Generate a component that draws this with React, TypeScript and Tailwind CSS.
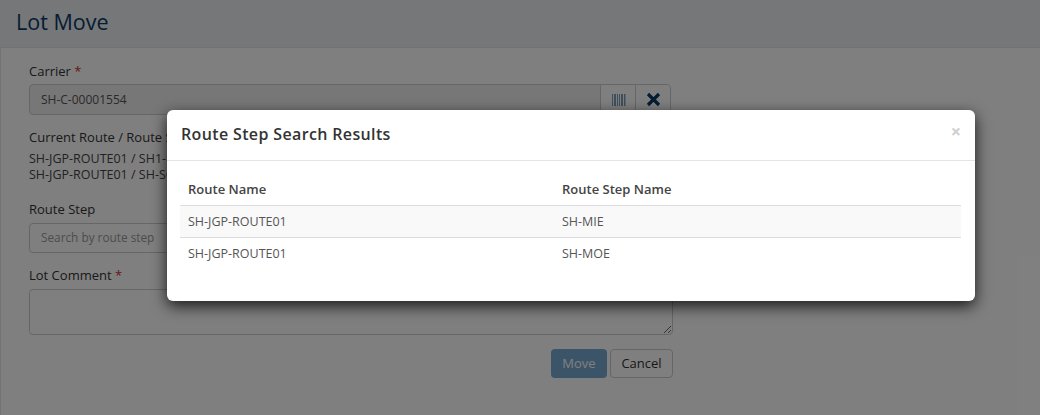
import React from "react";

const font = { fontFamily: '"Open Sans", sans-serif' };

const Req = () => <span className="text-[#c9302c]">*</span>;

const Barcode = () => (
  <svg width="14" height="12" viewBox="0 0 14 12" fill="#7f9cbc" className="ml-[1px]">
    <rect x="0" width="1" height="12" />
    <rect x="2" width="2" height="12" />
    <rect x="5" width="1" height="12" />
    <rect x="7" width="1" height="12" />
    <rect x="9" width="2" height="12" />
    <rect x="12" width="1" height="12" />
    <rect x="13" width="1" height="12" opacity="0.5" />
  </svg>
);

const App = () => {
  return (
    <div style={font} className="relative w-[1040px] h-[415px] overflow-hidden bg-white text-[13px] text-[#333]">
      <div className="h-[48px] bg-[#ebeef3] border-b border-[#e2e5ea] pl-4 flex items-center">
        <h1 className="text-[21.5px] leading-none text-[#0b3a66] pb-[4px]">Lot Move</h1>
      </div>
      <div className="pl-[28px] w-[673px] pt-[14px] border-l border-[#e6e6e6] h-[367px]">
        <div className="leading-[18px] h-[22px]">
          Carrier <Req />
        </div>
        <div className="flex w-[642px] h-[31px] border border-[#ccc] rounded-[4px] bg-[#eee] overflow-hidden">
          <div className="flex-1 pl-[11px] text-[12px] text-[#555] flex items-center">SH-C-00001554</div>
          <div className="w-[35px] bg-white border-l border-[#ccc] flex items-center justify-center">
            <Barcode />
          </div>
          <div className="w-[35px] bg-white border-l border-[#ccc] flex items-center justify-center">
            <svg width="15" height="15" viewBox="0 0 15 15" className="ml-[1px]">
              <path d="M2 2 L13 13 M13 2 L2 13" stroke="#0b3a66" strokeWidth="3.2" />
            </svg>
          </div>
        </div>
        <div className="mt-[13px] leading-[18px]">Current Route / Route Step</div>
        <div className="mt-[5px] text-[12.5px] leading-[16px] text-[#444]">
          <div>SH-JGP-ROUTE01 / SH1-MIE</div>
          <div>SH-JGP-ROUTE01 / SH-SOE</div>
        </div>
        <div className="mt-[17px] leading-[18px]">Route Step</div>
        <div className="mt-[5px] w-[642px] h-[30px] border border-[#ccc] rounded-[4px] bg-white pl-[11px] text-[11.8px] text-[#999] flex items-center">
          Search by route step
        </div>
        <div className="mt-[13px] leading-[18px]">
          Lot Comment <Req />
        </div>
        <textarea className="block mt-[5px] w-full h-[46px] border border-[#ccc] rounded-[4px] bg-white" readOnly />
        <div className="mt-[14px] flex justify-end gap-[3px]">
          <button className="w-[56px] h-[29px] rounded-[4px] bg-[#337ab7] opacity-65 text-white text-[13px]">Move</button>
          <button className="w-[63px] h-[29px] rounded-[4px] bg-white border border-[#ccc] text-[#333] text-[13px]">Cancel</button>
        </div>
      </div>

      {/* backdrop */}
      <div className="absolute inset-0 bg-black/50" />

      <div className="absolute left-[167px] top-[110px] w-[808px] h-[191px] bg-white rounded-[6px] shadow-[0_5px_15px_rgba(0,0,0,0.8)]">
        <div className="h-[51px] border-b border-[#e5e5e5] px-[14px] pb-[2px] flex items-center justify-between">
          <h4 className="text-[16px] font-semibold text-[#333] tracking-[0.36px]">Route Step Search Results</h4>
          <span className="text-[#cfcfcf] text-[18px] font-bold leading-none -mt-[7px]">×</span>
        </div>
        <div className="ml-[13px] mr-[14px] mt-[13px] text-[12.5px]">
          <div className="grid grid-cols-[374px_1fr] h-[32px] items-center pl-[8px] font-semibold text-[#444] text-[13px] border-b border-[#ddd]">
            <div>Route Name</div>
            <div>Route Step Name</div>
          </div>
          <div className="grid grid-cols-[374px_1fr] h-[32px] items-center pl-[8px] pt-[1px] bg-[#f9f9f9] border-b border-[#ddd] text-[#555]">
            <div>SH-JGP-ROUTE01</div>
            <div>SH-MIE</div>
          </div>
          <div className="grid grid-cols-[374px_1fr] h-[32px] items-center pl-[8px] text-[#555]">
            <div>SH-JGP-ROUTE01</div>
            <div>SH-MOE</div>
          </div>
        </div>
      </div>
    </div>
  );
};

export default App;
